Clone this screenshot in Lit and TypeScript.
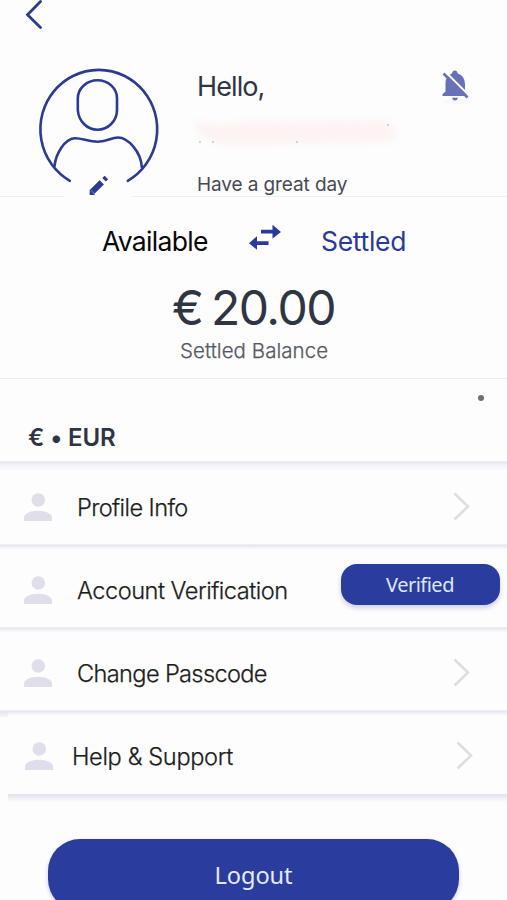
import { LitElement, html, css } from "lit";
import { customElement, property } from "lit/decorators.js";

@customElement("menu-row")
class MenuRow extends LitElement {
  @property() label = "";
  @property() badge = "";

  static styles = css`
    :host { display: block; }
    .row {
      display: flex;
      align-items: center;
      box-sizing: border-box;
      height: 100%;
      padding-left: var(--row-start, 24px);
      padding-right: var(--row-end, 37px);
      padding-top: 7px;
    }
    .person { flex: none; width: 28px; height: 30px; fill: #e0deea; }
    .label {
      flex: 1;
      margin-left: var(--label-gap, 25px);
      padding-top: 1px;
      font-size: 23.6px;
      font-weight: 300;
      line-height: 30px;
      letter-spacing: var(--label-spacing, -0.6px);
      white-space: nowrap;
      color: #1d1d20;
      -webkit-text-stroke: 0.25px #1d1d20;
    }
    .chevron { flex: none; width: 17px; height: 30px; fill: none; stroke: #dedde3; stroke-width: 2.6; }
    .badge {
      flex: none;
      box-sizing: border-box;
      width: 159px;
      height: 41px;
      margin: -11px -30px 0 0;
      border-radius: 16px;
      background: #2a3d9e;
      color: #dfe5fa;
      text-align: center;
      font: 400 20px/41px "Noto Sans", "Open Sans", sans-serif;
      letter-spacing: -0.5px;
      text-indent: -1px;
      box-shadow: 0 3px 5px rgba(40, 50, 110, 0.22);
    }
  `;

  render() {
    return html`
      <div class="row">
        <svg class="person" viewBox="0 0 28 30">
          <circle cx="14.3" cy="8" r="6.8" />
          <path d="M0 29V25.5C0 21.5 6.5 18.7 14 18.7S28 21.5 28 25.5V29Z" />
        </svg>
        <span class="label">${this.label}</span>
        ${this.badge
          ? html`<span class="badge">${this.badge}</span>`
          : html`<svg class="chevron" viewBox="0 0 17 30"><path d="M1.5 1.5 15 14.5 1.5 27.5" /></svg>`}
      </div>
    `;
  }
}

@customElement("app-root")
class AppRoot extends LitElement {
  static styles = css`
    :host {
      display: block;
      height: 900px;
      overflow: hidden;
      background: #fdfdfe;
      color: #2f3542;
      font-family: Inter, "Liberation Sans", sans-serif;
      white-space: nowrap;
    }
    svg { display: block; }
    .header { box-sizing: border-box; height: 197px; border-bottom: 1px solid #efeff2; }
    .topbar { height: 60px; padding-left: 24px; }
    .back { width: 20px; height: 32px; fill: none; stroke: #2b3a92; stroke-width: 2.8; stroke-linecap: round; }
    .profile { display: flex; align-items: flex-start; height: 136px; padding-left: 30px; }
    .avatar { position: relative; flex: none; width: 140px; height: 142px; fill: none; stroke: #2b3a92; stroke-width: 2.6; stroke-linecap: round; }
    .greeting { flex: 1; padding: 9px 0 0 27px; }
    .hello { font-size: 27px; line-height: 36px; letter-spacing: -0.9px; }
    .name { width: 212px; height: 38px; margin: 7px 0 0 -8px; }
    .wish { margin-top: 19px; font-size: 19px; line-height: 32px; letter-spacing: -0.1px; color: #464a52; }
    .bell { flex: none; width: 34px; height: 40px; margin: 8px 35px 0 0; }
    .balance { box-sizing: border-box; height: 182px; border-bottom: 1px solid #ebebf0; padding-top: 26px; }
    .switch { display: flex; align-items: center; height: 36px; padding-left: 102px; font-size: 26.5px; line-height: 36px; }
    .available { width: 146px; color: #08080a; letter-spacing: -0.7px; }
    .swap { width: 34px; height: 28px; margin: -7px 39px 0 0; fill: #2b3a9a; }
    .settled { color: #2b3a9a; letter-spacing: -0.3px; }
    .amount { margin-top: 17px; padding-left: 172px; font-size: 48px; line-height: 64px; letter-spacing: -1.5px; word-spacing: -3.5px; }
    .caption {
      margin-top: -2px;
      padding-left: 180px;
      font-size: 20.5px;
      line-height: 26px;
      font-weight: 300;
      letter-spacing: 0.05px;
      color: #55585f;
      -webkit-text-stroke: 0.25px #55585f;
    }
    .currency { display: flex; justify-content: space-between; box-sizing: border-box; height: 83px; padding: 42px 23px 0 28px; }
    .code { font-size: 24px; line-height: 34px; font-weight: 600; letter-spacing: -0.1px; }
    .dot { width: 6px; height: 6px; margin-top: -26px; border-radius: 50%; background: #707074; }
    .item { position: relative; height: 83px; }
    .item::before {
      content: "";
      display: block;
      position: absolute;
      inset: -1px 0 auto 0;
      height: 10px;
      background: linear-gradient(#ededf2, #e9e9f0 20%, #f4f4f9 45%, #fdfdfe);
    }
    .item.soft::before { height: 6px; background: linear-gradient(#f0f0f4, #e6e6ed 30%, #f4f4f9 60%, #fdfdfe); }
    .item.support::after {
      content: "";
      position: absolute;
      inset: 1px auto auto 0;
      width: 8px;
      height: 6px;
      background: linear-gradient(#e6e6ed, #f1f1f6 60%, #fdfdfe);
    }
    .verification { --label-spacing: -0.5px; }
    .passcode { --label-spacing: -0.65px; }
    .support { --row-start: 25px; --label-gap: 19px; --row-end: 34px; --label-spacing: -0.36px; }
    .end { height: 9px; margin-left: 8px; background: linear-gradient(#e2e2ed, #f0f0f8 50%, #fdfdfe); }
    .logout {
      width: 411px;
      height: 72px;
      margin: 36px 0 0 48px;
      border-radius: 32px;
      background: #2a3d9e;
      color: #e4e9fc;
      text-align: center;
      font: 400 23.6px/72px "Noto Sans", "Open Sans", sans-serif;
      letter-spacing: -0.1px;
      box-shadow: 0 2px 4px rgba(42, 61, 158, 0.25);
    }
  `;

  render() {
    return html`
      <div class="header">
        <div class="topbar">
          <svg class="back" viewBox="0 0 20 32"><path d="M16.5 1.5 3.5 14.7 16.5 27.5" /></svg>
        </div>
        <div class="profile">
          <svg class="avatar" viewBox="0 0 140 142">
            <rect x="34" y="134" width="68" height="6" fill="#fdfdfe" stroke="none" />
            <path d="M39.8 120.8A58.4 59.4 0 1 1 97.8 120.8" />
            <path d="M47.8 38.5C47.8 28 57 20.2 67.5 20.2S87 28 87 38.5V50C87 61 78 69.8 67.5 69.8S48.5 61 47.8 50Z" />
            <path d="M24.5 106C26 93 35 79 44.5 78.3C52 78 58 81.7 68 81.7S81 77.5 88 77.5C98 77.5 111 92 111.8 107" />
            <path d="M62.3 131.7 71.8 122.3" stroke-width="6" stroke-linecap="butt" />
            <path d="M59.7 129V134.9H65Z" fill="#2b3a92" stroke="none" />
            <path d="M74 119.8 76.4 117.4" stroke-width="5" stroke-linecap="butt" />
          </svg>
          <div class="greeting">
            <div class="hello">Hello,</div>
            <svg class="name" viewBox="0 0 212 38">
              <defs><filter id="smudge" x="-10%" y="-30%" width="120%" height="160%"><feGaussianBlur stdDeviation="3" /></filter></defs>
              <path d="M5 9 30 12 60 9 200 8 208 18 204 30 110 32 50 35 30 33 10 24Z" fill="#fcf4f3" filter="url(#smudge)" />
              <g fill="#c9c2c7"><circle cx="11" cy="30" r="1" /><circle cx="24" cy="30" r="1" /><circle cx="108" cy="30" r="1" /><circle cx="199" cy="13" r="1" /></g>
            </svg>
            <div class="wish">Have a great day</div>
          </div>
          <svg class="bell" viewBox="0 0 34 40">
            <ellipse cx="18" cy="33.5" rx="13" ry="2.5" fill="#f8f8f9" />
            <path d="M14 5.5Q14.5 2.5 16.8 2.5T19.8 5.5Q27 8 27 16V24.5L30 28H4.5V26.3L7.5 23.5V15Q7.5 8 14 5.5ZM14 29.8H20Q19.5 32.5 17 32.5T14 29.8Z" fill="#6671b7" />
            <path d="M7.5 4 31.5 28" stroke="#fdfdfe" stroke-width="2.2" />
            <path d="M5.5 5.5 29.5 29.5" stroke="#6671b7" stroke-width="2.6" />
          </svg>
        </div>
      </div>
      <div class="balance">
        <div class="switch">
          <span class="available">Available</span>
          <svg class="swap" viewBox="0 0 34 28">
            <path d="M13 5.8H24.5V0.8L33 8 24.5 14.5V9.6H13ZM20.5 17.2H9V12.2L1 19.3 9 25.8V21H20.5Z" />
          </svg>
          <span class="settled">Settled</span>
        </div>
        <div class="amount">€ 20.00</div>
        <div class="caption">Settled Balance</div>
      </div>
      <div class="currency"><span class="code">€ • EUR</span><span class="dot"></span></div>
      <menu-row class="item" label="Profile Info"></menu-row>
      <menu-row class="item soft verification" label="Account Verification" badge="Verified"></menu-row>
      <menu-row class="item soft passcode" label="Change Passcode"></menu-row>
      <menu-row class="item soft support" label="Help &amp; Support"></menu-row>
      <div class="end"></div>
      <div class="logout">Logout</div>
    `;
  }
}
